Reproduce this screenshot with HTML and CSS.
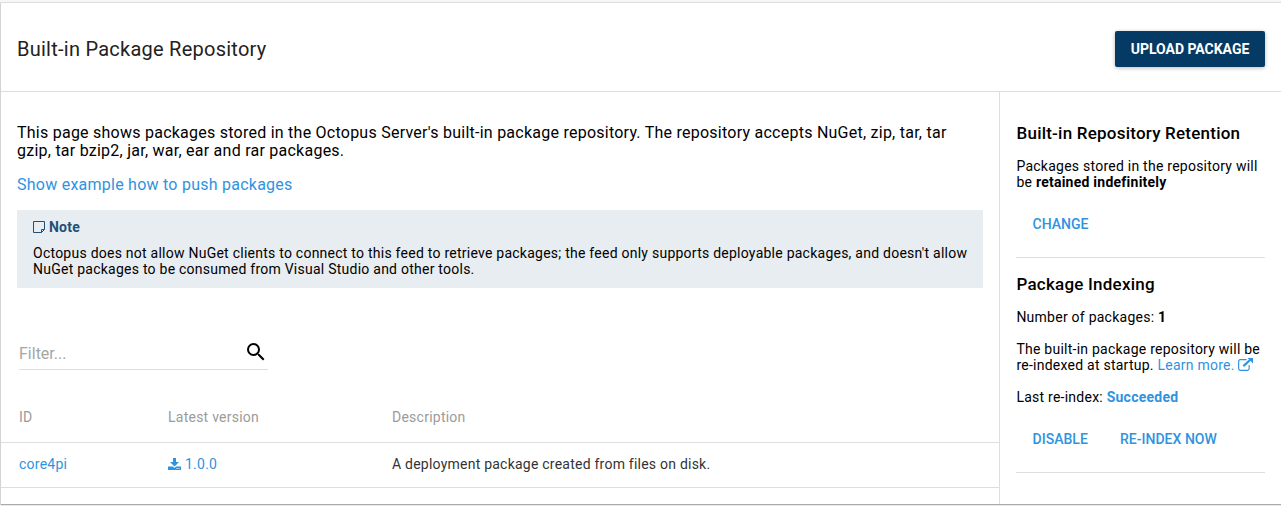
FILE: index.html
```html
<!DOCTYPE html>
<html lang="en">
<head>
<meta charset="utf-8">
<title>Built-in Package Repository</title>
<link rel="stylesheet" href="styles.css">
</head>
<body>
<div class="card">
  <header class="header">
    <h1 class="title">Built-in Package Repository</h1>
    <button class="upload"><span class="upload-label">UPLOAD PACKAGE</span></button>
  </header>
  <div class="columns">
    <main class="main">
      <p class="intro"><span>This page shows packages stored in the Octopus Server's built-in package repository. The repository accepts NuGet, zip, tar, tar</span><br><span class="intro-end">gzip, tar bzip2, jar, war, ear and rar packages.</span></p>
      <a class="example">Show example how to push packages</a>
      <section class="note">
        <h2 class="note-title">
          <svg class="note-icon" viewBox="0 0 12 12" fill="none" stroke="#1f5078"><path d="M.5.5h11v8l-3 3h-8zM11.500 8.500h-3v3"/></svg>
          <span class="note-label">Note</span>
        </h2>
        <p class="note-text"><span>Octopus does not allow NuGet clients to connect to this feed to retrieve packages; the feed only supports deployable packages, and doesn't allow</span><br><span>NuGet packages to be consumed from Visual Studio and other tools.</span></p>
      </section>
      <div class="filter">
        <span class="filter-hint">Filter...</span>
        <svg class="search" viewBox="0 0 24 24"><path d="M15.500 14h-.79l-.28-.27A6.471 6.471 0 0 0 16 9.500 6.500 6.500 0 1 0 9.500 16c1.610 0 3.090-.59 4.230-1.570l.27.28v.79l5 4.990L20.490 19l-4.990-5zm-6 0C7.010 14 5 11.990 5 9.500S7.010 5 9.500 5 14 7.010 14 9.500 11.990 14 9.500 14z"/></svg>
      </div>
      <div class="row row-head"><span>ID</span><span class="head-version">Latest version</span><span>Description</span></div>
      <div class="row row-item">
        <a class="link">core4pi</a>
        <a class="link version">
          <svg class="download" viewBox="0 0 13 12" fill="#2f93e0"><path d="M5 0h3v4h3L6.500 8.500 2 4h3zM0 8.500h4.500l2 1.200 2-1.200H13V12H0z"/><path fill="#fff" d="M8.500 10h1v1h-1zm2 0h1v1h-1z"/></svg>
          <span>1.0.0</span>
        </a>
        <span class="description">A deployment package created from files on disk.</span>
      </div>
    </main>
    <aside class="aside">
      <section class="panel retention">
        <h3 class="panel-title">Built-in Repository Retention</h3>
        <p class="text"><span>Packages stored in the repository will</span><br>be <strong>retained indefinitely</strong></p>
        <div class="actions"><a class="action change">CHANGE</a></div>
      </section>
      <section class="panel indexing">
        <h3 class="panel-title">Package Indexing</h3>
        <p class="text">Number of packages: <strong>1</strong></p>
        <p class="text">The built-in package repository will be<br>re-indexed at startup. <a class="link">Learn more. <svg class="external" viewBox="0 0 14 12" fill="none" stroke="#2f93e0"><path stroke-width="1.100" d="M8 1.500H2.200Q.6 1.500.6 3.100v6.700q0 1.600 1.600 1.600h6.600q1.600 0 1.600-1.600V6.500"/><path stroke-width="2" d="M5 7.500 11.500 1.500"/><path fill="#2f93e0" stroke="none" d="M9 0h5v5z"/></svg></a></p>
        <p class="text">Last re-index: <strong class="link">Succeeded</strong></p>
        <div class="actions"><a class="action">DISABLE</a><a class="action">RE-INDEX NOW</a></div>
      </section>
    </aside>
  </div>
</div>
</body>
</html>
```
FILE: styles.css
```css
* { box-sizing: border-box; }
body {
  margin: 0;
  height: 506px;
  padding: 3px 0 2px 1px;
  overflow: hidden;
  background: #f6f6f6;
  color: #000;
  font: 14px/16px Roboto, sans-serif;
  letter-spacing: .245px;
}
h1, h2, h3, p { margin: 0; }
.card {
  display: flex;
  flex-direction: column;
  height: 501px;
  background: #fff;
  box-shadow: 0 1px 1px #aaa, 0 0 0 1px #ddd;
}
.header {
  display: flex;
  align-items: center;
  justify-content: space-between;
  height: 89px;
  padding: 3px 16px 0;
  border-bottom: 1px solid #dedede;
}
.title { font-size: 20px; font-weight: 400; line-height: 24px; letter-spacing: .25px; color: #222; }
.upload {
  width: 150px;
  height: 36px;
  padding: 0;
  border: 0;
  border-radius: 2px;
  background: #043a63;
  color: #fff;
  box-shadow: 0 1px 4px rgba(0, 0, 0, .28);
  font: 700 14px/36px Roboto, sans-serif;
  letter-spacing: -.02px;
}
.columns { display: flex; flex: 1; }
.main { width: 998px; padding-top: 32px; }
.intro { margin-left: 16px; font-size: 16px; line-height: 18px; white-space: nowrap; }
.example { display: block; margin: 16px 0 0 16px; color: #2f93e0; font-size: 16px; line-height: 18px; }
.note { height: 78px; margin: 16px 16px 0; padding: 9px 16px 0; background: #e8edf1; }
.note-title { display: flex; align-items: center; gap: 4px; height: 16px; color: #1f5078; font-size: 14px; font-weight: 700; line-height: 16px; }
.note-icon { width: 12px; height: 12px; }
.note-text { margin-top: 10px; white-space: nowrap; }
.filter {
  display: flex;
  justify-content: space-between;
  width: 249px;
  height: 34px;
  margin: 48px 0 0 18px;
  border-bottom: 1px solid #dedede;
}
.filter-hint { padding-top: 8px; color: #a5a5a5; font-size: 16px; line-height: 20px; letter-spacing: 0; }
.search { width: 24px; height: 24px; margin: 4px 0 0; }
.row { display: grid; grid-template-columns: 149px 224px 1fr; align-items: center; padding-left: 18px; border-bottom: 1px solid #dedede; }
.row-head { height: 73px; padding-top: 22px; color: #9b9b9b; }
.row-item { height: 45px; padding-bottom: 2px; }
.description { color: #333; letter-spacing: .23px; }
.link { color: #2f93e0; }
.version { display: flex; align-items: center; gap: 4px; }
.download { width: 13px; height: 12px; margin-top: -1px; }
.aside { width: 282px; padding: 0 16px; border-left: 1px solid #dedede; }
.panel { border-bottom: 1px solid #dedede; }
.retention { height: 166px; padding-top: 32px; }
.indexing { height: 215px; padding-top: 17px; }
.panel-title { margin-bottom: 15px; padding-left: .5px; font-size: 17px; font-weight: 500; line-height: 19px; letter-spacing: .22px; white-space: nowrap; }
.text { margin-bottom: 16px; padding-left: .4px; white-space: nowrap; }
.external { width: 15px; height: 13px; vertical-align: -1px; }
.actions { display: flex; gap: 32px; padding: 10px 16.5px; }
.action { color: #2f93e0; font-weight: 500; letter-spacing: .03px; }
```
